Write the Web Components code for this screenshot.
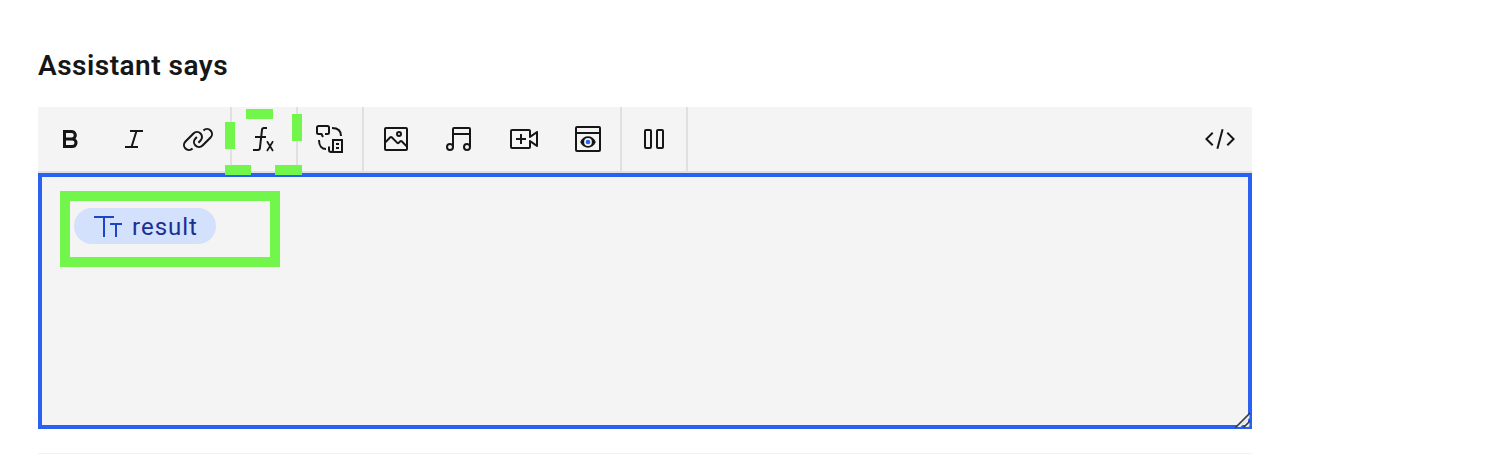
<!DOCTYPE html>
<html lang="en">
<head>
<meta charset="utf-8">
<title>Assistant says</title>
<style>
html,body{margin:0;background:#fff;overflow:hidden}
body{font-family:"Roboto","Noto Sans",sans-serif;color:#161616}
</style>
</head>
<body>
<response-editor></response-editor>
<script>
const ICONS = {
  bold: '<path d="M18.25,25H9V7h8.5a5.25,5.25,0,0,1,4,8.65A5.25,5.25,0,0,1,18.25,25ZM12,22h6.23a2.25,2.25,0,1,0,0-4.5H12Zm0-7.5h5.5a2.25,2.25,0,1,0,0-4.5H12Z"/>',
  italic: '<path d="M25 9V7H12v2h5.140L12.770 23H7v2h13v-2h-5.140l4.370-14z"/>',
  link: '<path d="M29.25,6.76a6,6,0,0,0-8.5,0l1.42,1.42a4,4,0,1,1,5.67,5.67l-8,8a4,4,0,1,1-5.67-5.66l1.41-1.42-1.41-1.42-1.42,1.42a6,6,0,0,0,0,8.5A6,6,0,0,0,17,25a6,6,0,0,0,4.27-1.76l8-8A6,6,0,0,0,29.25,6.76Z"/><path d="M4.19,24.82a4,4,0,0,1,0-5.67l8-8a4,4,0,0,1,5.67,0A3.94,3.94,0,0,1,19,14a4,4,0,0,1-1.17,2.85L15.71,19l1.42,1.42,2.12-2.12a6,6,0,0,0-8.51-8.51l-8,8a6,6,0,0,0,0,8.51A6,6,0,0,0,7,28a6.07,6.07,0,0,0,4.28-1.76L9.86,24.82A4,4,0,0,1,4.19,24.82Z"/>',
  fn: '<g fill="none" stroke="currentColor" stroke-width="2"><path d="M19 5h-3a2 2 0 0 0-2 1.800l-2.100 18.400a2 2 0 0 1-2 1.800H5M7 14h11"/><path stroke-width="1.700" d="M19 18.200l6 9.800M25 18.200l-6 9.800"/></g>',
  channel: '<g fill="none" stroke="currentColor" stroke-width="2"><path d="M9 14l-1.500-3H4.500A1.500 1.500 0 0 1 3 9.500V4.500A1.500 1.500 0 0 1 4.500 3h9A1.500 1.500 0 0 1 15 4.500v5A1.500 1.500 0 0 1 13.500 11H11"/><path d="M18 5c6 0 9 3 9 8M5 17c0 6 3 9 7 9"/><path d="M15 23.500v3.500a2 2 0 0 0 2 2h11V17h-9v10a2 2 0 0 1-2 2"/><path d="M22 21h3M22 25h3"/></g>',
  image: '<path d="M19,14a3,3,0,1,0-3-3A3,3,0,0,0,19,14Zm0-4a1,1,0,1,1-1,1A1,1,0,0,1,19,10Z"/><path d="M26,4H6A2,2,0,0,0,4,6V26a2,2,0,0,0,2,2H26a2,2,0,0,0,2-2V6A2,2,0,0,0,26,4Zm0,22H6V20l5-5,5.590,5.590a2,2,0,0,0,2.820,0L21,19l5,5Zm0-4.830-3.590-3.590a2,2,0,0,0-2.820,0L18,19.170l-5.590-5.590a2,2,0,0,0-2.820,0L6,17.170V6H26Z"/>',
  music: '<path d="M25 4H10A2 2 0 0 0 8 6V20.556A3.955 3.955 0 0 0 6 20a4 4 0 1 0 4 4V12H25v8.556A3.954 3.954 0 0 0 23 20a4 4 0 1 0 4 4V6A2 2 0 0 0 25 4ZM6 26a2 2 0 1 1 2-2A2 2 0 0 1 6 26Zm17 0a2 2 0 1 1 2-2A2 2 0 0 1 23 26ZM10 6H25v4H10Z"/>',
  video: '<path d="M18 15h-4v-4h-2v4H8v2h4v4h2v-4h4z"/><path d="M21 26H4a2 2 0 0 1-2-2V8a2 2 0 0 1 2-2H21a2 2 0 0 1 2 2v4.060l5.420-3.870A1 1 0 0 1 30 9V23a1 1 0 0 1-1.580.810L23 19.940V24A2 2 0 0 1 21 26ZM4 8V24H21V18a1 1 0 0 1 1.580-.810L28 21.060V10.940L22.580 14.810A1 1 0 0 1 21 14V8Z"/>',
  iframe: '<g fill="none" stroke="currentColor" stroke-width="2"><rect x="4" y="4" width="24" height="24" rx="1"/><path d="M4 10h24"/></g><path d="M8.200 19c3-7.600 12.600-7.600 15.600 0c-3 7.600-12.600 7.600-15.600 0z"/><circle cx="16" cy="19" r="3.900" fill="#f4f4f4"/><circle cx="16" cy="19" r="2.300" fill="#2b62f6"/>',
  pause: '<g fill="none" stroke="currentColor" stroke-width="2"><rect x="7" y="7" width="6" height="18" rx="1"/><rect x="19" y="7" width="6" height="18" rx="1"/></g>',
  code: '<path d="M31 16l-7 7-1.410-1.410L28.170 16l-5.580-5.590L24 9zM1 16l7-7 1.410 1.410L3.830 16l5.580 5.590L8 23zM12.419 25.484L17.639 6l1.932.518L14.350 26z"/>',
  text: '<path d="M3 6h20v2h-9v19h-2V8H3zM19 13h12v2h-5v12h-2V15h-5z"/>'
};

class UiIcon extends HTMLElement {
  connectedCallback() {
    this.attachShadow({mode: 'open'}).innerHTML = `<style>:host{display:block;width:32px;height:32px}svg{display:block}</style>
      <svg width="32" height="32" viewBox="0 0 32 32" fill="currentColor" aria-hidden="true">${ICONS[this.getAttribute('name')]}</svg>`;
  }
}
customElements.define('ui-icon', UiIcon);

class ToolButton extends HTMLElement {
  connectedCallback() {
    this.attachShadow({mode: 'open'}).innerHTML = `<style>
      :host{display:flex;width:64px;height:64px;align-items:center;justify-content:center}
      </style><ui-icon name="${this.getAttribute('icon')}"></ui-icon>`;
  }
}
customElements.define('tool-button', ToolButton);

class ToolGroup extends HTMLElement {
  connectedCallback() {
    this.attachShadow({mode: 'open'}).innerHTML = `<style>
      :host{display:flex;box-sizing:border-box;height:64px;border-right:2px solid #e0e0e0}
      :host([end]){border-right:0;margin-left:auto}
      </style><slot></slot>`;
  }
}
customElements.define('tool-group', ToolGroup);

class DashMarker extends HTMLElement {
  connectedCallback() {
    this.attachShadow({mode: 'open'}).innerHTML = `<style>
      :host{position:absolute;left:-7px;top:2px;width:77px;height:66px;z-index:2;pointer-events:none}
      svg{display:block}</style>
      <svg width="77" height="66" fill="#73f64b"><path d="M21 0h27v10H21zM0 13h10v27H0zM67 5h10v27H67zM0 56h26v10H0zM50 56h27v10H50z"/></svg>`;
  }
}
customElements.define('dash-marker', DashMarker);

class VariableChip extends HTMLElement {
  connectedCallback() {
    this.attachShadow({mode: 'open'}).innerHTML = `<style>
      :host{display:flex;box-sizing:border-box;width:142px;height:36px;border-radius:18px;background:#d3e1fd;align-items:center;padding-left:17px;color:#1e45c9}
      span{display:block;margin-left:9px;padding-top:2px;font-size:24px;line-height:36px;letter-spacing:1px;color:#1a2f94;white-space:nowrap}
      </style><ui-icon name="text"></ui-icon><span><slot></slot></span>`;
  }
}
customElements.define('variable-chip', VariableChip);

class ResponseEditor extends HTMLElement {
  connectedCallback() {
    this.attachShadow({mode: 'open'}).innerHTML = `<style>
      :host{display:block;box-sizing:border-box;height:454px;width:1252px;padding:46px 0 0 38px}
      h2{margin:0 0 21px;font-size:28px;line-height:40px;font-weight:600;letter-spacing:.5px;white-space:nowrap}
      .bar{display:flex;height:64px;background:#f4f4f4;border-bottom:2px solid #e0e0e0}
      .marked{position:relative}
      .area{position:relative;box-sizing:border-box;height:256px;border:4px solid #2b61f3;background:#f4f4f4;padding:14px 0 0 18px}
      .frame{box-sizing:border-box;width:220px;height:76px;border:10px solid #73f64b;padding:7px 0 0 4px}
      .grip{position:absolute;right:-4px;bottom:-4px}
      .rule{height:1px;margin-top:24px;background:#f2f2f2}
      </style>
      <h2>Assistant says</h2>
      <div class="bar">
        <tool-group><tool-button icon="bold"></tool-button><tool-button icon="italic"></tool-button><tool-button icon="link"></tool-button></tool-group>
        <tool-group class="marked"><tool-button icon="fn"></tool-button><dash-marker></dash-marker></tool-group>
        <tool-group><tool-button icon="channel"></tool-button></tool-group>
        <tool-group><tool-button icon="image"></tool-button><tool-button icon="music"></tool-button><tool-button icon="video"></tool-button><tool-button icon="iframe"></tool-button></tool-group>
        <tool-group><tool-button icon="pause"></tool-button></tool-group>
        <tool-group end><tool-button icon="code"></tool-button></tool-group>
      </div>
      <div class="area">
        <div class="frame"><variable-chip>result</variable-chip></div>
        <svg class="grip" width="18" height="18"><path d="M2.500 16L15.500 3v4L6.500 16zM10 16l5.500-5.500V15l-1 1z" fill="#e6e6ee"/><path d="M1.500 16.500L16 2M9.500 16.500L16 10" fill="none" stroke="#36383f" stroke-width="1.600"/></svg>
      </div>
      <div class="rule"></div>`;
  }
}
customElements.define('response-editor', ResponseEditor);
</script>
</body>
</html>
